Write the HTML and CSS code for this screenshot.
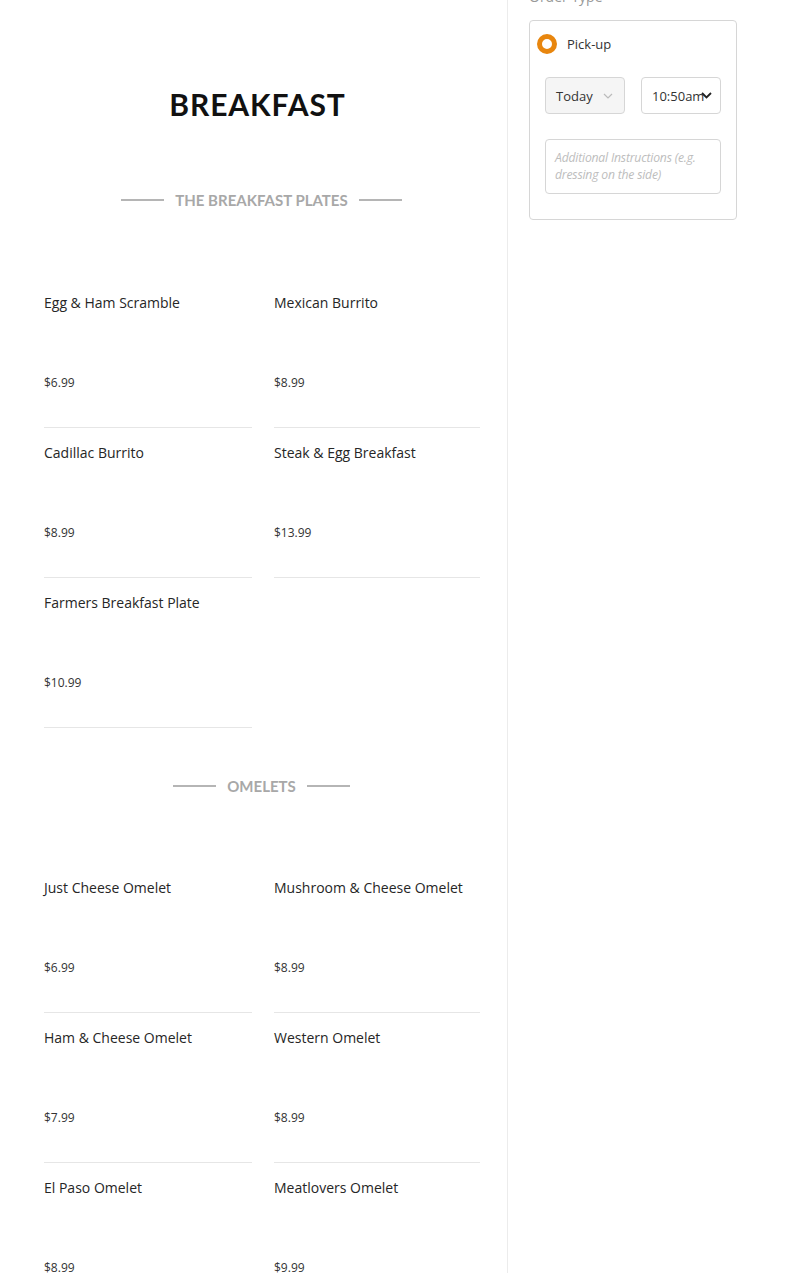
FILE: index.html
```html
<html>
<head>
  <meta charset="UTF-8">
  <meta name="viewport" content="width=device-width, initial-scale=1">
  <title>Breakfast Menu</title>
  <link rel="stylesheet" href="styles.css">
</head>
<body>
  <div class="page">

    <!-- MENU COLUMN -->
    <div class="menu">
      <h1 class="menu-title">BREAKFAST</h1>

      <div class="section">
        <h2 class="section-title"><span>THE BREAKFAST PLATES</span></h2>
        <div class="items">
          <div class="item"><p class="item-name">Egg &amp; Ham Scramble</p><p class="item-price">$6.99</p></div>
          <div class="item"><p class="item-name">Mexican Burrito</p><p class="item-price">$8.99</p></div>
          <div class="item"><p class="item-name">Cadillac Burrito</p><p class="item-price">$8.99</p></div>
          <div class="item"><p class="item-name">Steak &amp; Egg Breakfast</p><p class="item-price">$13.99</p></div>
          <div class="item"><p class="item-name">Farmers Breakfast Plate</p><p class="item-price">$10.99</p></div>
        </div>
      </div>

      <div class="section">
        <h2 class="section-title"><span>OMELETS</span></h2>
        <div class="items">
          <div class="item"><p class="item-name">Just Cheese Omelet</p><p class="item-price">$6.99</p></div>
          <div class="item"><p class="item-name">Mushroom &amp; Cheese Omelet</p><p class="item-price">$8.99</p></div>
          <div class="item"><p class="item-name">Ham &amp; Cheese Omelet</p><p class="item-price">$7.99</p></div>
          <div class="item"><p class="item-name">Western Omelet</p><p class="item-price">$8.99</p></div>
          <div class="item"><p class="item-name">El Paso Omelet</p><p class="item-price">$8.99</p></div>
          <div class="item"><p class="item-name">Meatlovers Omelet</p><p class="item-price">$9.99</p></div>
        </div>
      </div>
    </div>

    <!-- ORDER SIDEBAR -->
    <div class="sidebar">
      <p class="order-label">Order Type</p>
      <div class="order-card">
        <label class="radio-row">
          <span class="radio"></span>
          <span>Pick-up</span>
        </label>
        <div class="fields">
          <div class="selects">
            <div class="select select-muted">
              <span>Today</span>
              <svg width="10" height="6" viewBox="0 0 10 6"><path d="M1 1l4 4 4-4" fill="none" stroke="#bbb" stroke-width="1.2"/></svg>
            </div>
            <div class="select select-time">
              <span>10:50am</span>
              <svg width="11" height="7" viewBox="0 0 11 7"><path d="M1 1l4.5 4.5L10 1" fill="none" stroke="#222" stroke-width="1.8"/></svg>
            </div>
          </div>
          <textarea class="notes" placeholder="Additional Instructions (e.g. dressing on the side)"></textarea>
        </div>
      </div>
    </div>

  </div>
</body>
</html>
```

FILE: styles.css
```css
body {
  margin: 0;
  padding: 0;
  background: #fff;
  font-family: 'Open Sans', 'Noto Sans', sans-serif;
  color: #333;
}

.page {
  display: flex;
  align-items: flex-start;
  height: 1273px;
  overflow: hidden;
}

/* menu column */
.menu {
  width: 508px;
  box-sizing: border-box;
  padding: 0 28px 0 44px;
  border-right: 1px solid #ececec;
  min-height: 1273px;
}

.menu-title {
  margin: 86px 0 0 -8px;
  text-align: center;
  font-family: Lato, sans-serif;
  font-weight: 700;
  font-size: 30px;
  line-height: 36px;
  letter-spacing: 0.9px;
  color: #111;
}

.section-title {
  display: flex;
  justify-content: center;
  align-items: center;
  gap: 11px;
  margin: 68px 0 0;
  font-family: Lato, sans-serif;
  font-weight: 700;
  font-size: 15px;
  line-height: 20px;
  color: #a8a8a8;
}
.section + .section .section-title {
  margin-top: 48px;
}
.section-title::before,
.section-title::after {
  content: "";
  width: 43px;
  height: 2px;
  background: #b5b5b5;
}

.items {
  display: grid;
  grid-template-columns: 208px 206px;
  column-gap: 22px;
  margin-top: 68px;
}
.section + .section .items {
  margin-top: 67px;
}

.item {
  height: 150px;
  box-sizing: border-box;
  padding-top: 15px;
  border-bottom: 1px solid #e6e6e6;
}
.item-name {
  margin: 0;
  font-size: 14px;
  font-weight: 500;
  line-height: 20px;
  color: #262626;
}
.item-price {
  margin: 62px 0 0;
  font-size: 12px;
  line-height: 16px;
  color: #333;
}

/* sidebar */
.sidebar {
  padding-left: 21px;
  margin-top: -13px;
}
.order-label {
  margin: 0 0 13px;
  font-size: 14px;
  line-height: 20px;
  color: #999;
}
.order-card {
  width: 208px;
  box-sizing: border-box;
  border: 1px solid #d6d6d6;
  border-radius: 4px;
  padding: 13px 0 25px;
}
.radio-row {
  display: flex;
  align-items: center;
  gap: 10px;
  padding-left: 7px;
  font-size: 13px;
  color: #333;
}
.radio {
  width: 20px;
  height: 20px;
  box-sizing: border-box;
  border: 5px solid #e8860e;
  border-radius: 50%;
}
.fields {
  margin: 23px 15px 0;
}
.selects {
  display: flex;
  justify-content: space-between;
}
.select {
  width: 80px;
  height: 37px;
  box-sizing: border-box;
  border: 1px solid #d6d6d6;
  border-radius: 4px;
  display: flex;
  align-items: center;
  padding-left: 10px;
  font-size: 13px;
  color: #333;
}
.select-muted {
  background: #f5f5f5;
  justify-content: space-between;
  padding-right: 11px;
}
.select-time {
  background: #fff;
  padding-right: 0;
}
.select-time svg {
  margin-left: -3px;
}
.notes {
  display: block;
  width: 176px;
  height: 55px;
  box-sizing: border-box;
  margin-top: 25px;
  padding: 9px 3px 8px 9px;
  border: 1px solid #d6d6d6;
  border-radius: 4px;
  resize: none;
  font-family: inherit;
  font-size: 12.2px;
  line-height: 17px;
  letter-spacing: -0.2px;
}
.notes::placeholder {
  color: #bdbdbd;
  font-style: italic;
}
```
